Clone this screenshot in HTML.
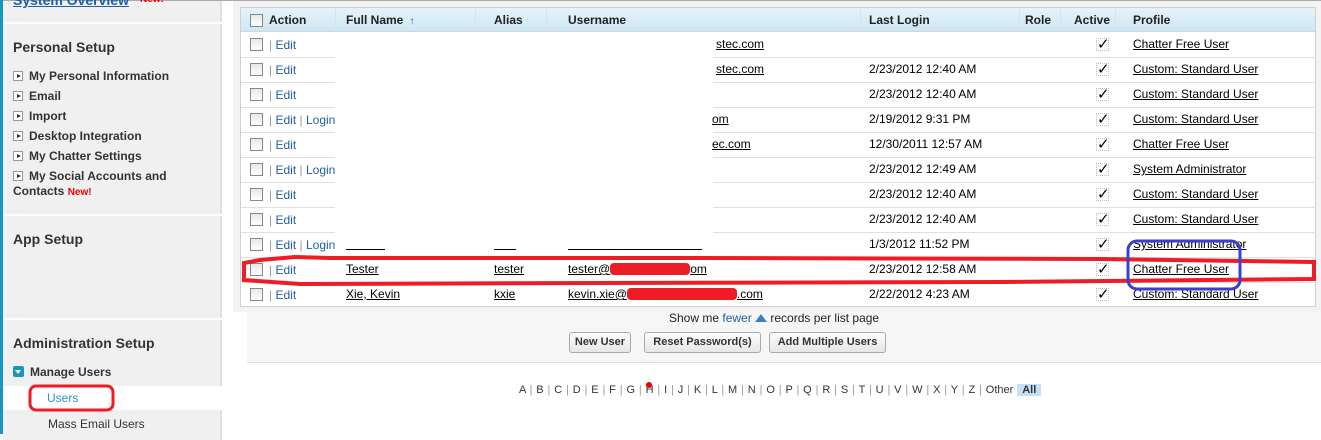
<!DOCTYPE html>
<html><head><meta charset="utf-8"><style>
*{margin:0;padding:0;box-sizing:border-box}
body{width:1321px;height:434px;overflow:hidden;background:#fff;font-family:"Liberation Sans",Arial,sans-serif;font-size:12px;color:#000;position:relative}
.a{position:absolute;white-space:nowrap}
.sec{position:absolute;left:3px;width:219px;background:#f0f0f0;border-right:2px solid #e0e0e0}
.h{position:absolute;left:13px;font-size:14px;font-weight:bold;color:#333}
.it{position:absolute;left:13px;font-weight:bold;color:#333;font-size:12px}
.tri{display:inline-block;width:10px;height:10px;border:1px solid #999;background:#fff;vertical-align:-1px;margin-right:6px;position:relative}
.tri:after{content:"";position:absolute;left:3px;top:2px;border-left:4px solid #333;border-top:2.5px solid transparent;border-bottom:2.5px solid transparent}
.cb{position:absolute;left:250px;width:13px;height:13px;border:1px solid #888;background:linear-gradient(#e8e8e8,#fff)}
.bar{color:#999}
.lnk{color:#1f5fa8}
u{text-decoration:underline}
.ck{position:absolute;left:1096px;width:13px;height:13px;border:1px dotted #bbb;font-size:15px;line-height:11px}
.hd{position:absolute;top:13px;font-weight:bold;color:#222}
.vl{position:absolute;top:9px;height:23px;width:1px;background:#d4e2ea}
.btn{position:absolute;top:332px;height:21px;border:1px solid #aaa;border-radius:3px;background:linear-gradient(#fdfdfd,#e6e6e6);font-weight:bold;font-size:11px;color:#333;text-align:center;line-height:19px}
.alpha{position:absolute;top:384px;font-size:11px;color:#333;word-spacing:0.8px}
.rd{display:inline-block;height:12px;background:#ee1c25;border-radius:4px;vertical-align:-2px}
</style></head><body>
<div class="a" style="left:0;top:0;width:1321px;height:1px;background:#aaa"></div>
<div class="a" style="left:0;top:0;width:3px;height:434px;background:#1797c0"></div>
<div class="sec" style="top:1px;height:21px"></div>
<div class="a" style="left:13px;top:-8px;font-size:14px;font-weight:bold;color:#1f5fa8;text-decoration:underline">System Overview</div>
<div class="a" style="left:140px;top:-6px;font-size:10px;font-weight:bold;color:#e00">New!</div>
<div class="sec" style="top:24px;height:190px"></div>
<div class="h" style="top:39px">Personal Setup</div>
<div class="it" style="top:69px"><span class="tri"></span>My Personal Information</div>
<div class="it" style="top:89px"><span class="tri"></span>Email</div>
<div class="it" style="top:109px"><span class="tri"></span>Import</div>
<div class="it" style="top:129px"><span class="tri"></span>Desktop Integration</div>
<div class="it" style="top:149px"><span class="tri"></span>My Chatter Settings</div>
<div class="it" style="top:169px"><span class="tri"></span>My Social Accounts and</div>
<div class="it" style="top:184px">Contacts <span style="color:#e00;font-size:10px">New!</span></div>
<div class="sec" style="top:216px;height:102px"></div>
<div class="h" style="top:231px">App Setup</div>
<div class="sec" style="top:320px;height:66px"></div>
<div class="h" style="top:335px">Administration Setup</div>
<div class="it" style="top:365px"><span style="display:inline-block;width:11px;height:11px;background:#1797c0;border-radius:2px;vertical-align:-1px;margin-right:6px;position:relative"><span style="position:absolute;left:2px;top:4px;border-top:4px solid #fff;border-left:3.5px solid transparent;border-right:3.5px solid transparent"></span></span>Manage Users</div>
<div class="a" style="left:3px;top:386px;width:219px;height:23px;background:#fff"></div>
<div class="a" style="left:47px;top:391px;color:#2a8fc6;font-size:12px">Users</div>
<div class="sec" style="top:410px;height:30px"></div>
<div class="a" style="left:48px;top:417px;color:#333">Mass Email Users</div>

<div class="a" style="left:233px;top:1px;width:1088px;height:311px;background:#f3f3f3"></div>
<div class="a" style="left:247px;top:312px;width:1074px;height:51px;background:#f6f6f6;border-bottom:1px solid #e0e0e0"></div>
<div class="a" style="left:240px;top:7px;width:1076px;height:300px;background:#fff;border:1px solid #d0d0d0"></div>
<div class="a" style="left:241px;top:8px;width:1074px;height:24px;background:linear-gradient(#e4f3fa,#cfe7f3);border-bottom:1px solid #c3d9e5"></div>
<div class="cb" style="top:14px"></div>
<div class="hd" style="left:269px">Action</div>
<div class="vl" style="left:335px"></div><div class="hd" style="left:346px">Full Name <span style="color:#1f5fa8;font-size:10px">&nbsp;↑</span></div>
<div class="vl" style="left:475px"></div><div class="hd" style="left:494px">Alias</div>
<div class="vl" style="left:546px"></div><div class="hd" style="left:568px">Username</div>
<div class="vl" style="left:860px"></div><div class="hd" style="left:869px">Last Login</div>
<div class="vl" style="left:1019px"></div><div class="hd" style="left:1025px">Role</div>
<div class="vl" style="left:1060px"></div><div class="hd" style="left:1074px">Active</div>
<div class="vl" style="left:1115px"></div><div class="hd" style="left:1133px">Profile</div>

<div class="a" style="left:241px;top:57px;width:1074px;height:1px;background:#e0e0e0"></div>
<div class="a" style="left:241px;top:82px;width:1074px;height:1px;background:#e0e0e0"></div>
<div class="a" style="left:241px;top:107px;width:1074px;height:1px;background:#e0e0e0"></div>
<div class="a" style="left:241px;top:132px;width:1074px;height:1px;background:#e0e0e0"></div>
<div class="a" style="left:241px;top:157px;width:1074px;height:1px;background:#e0e0e0"></div>
<div class="a" style="left:241px;top:182px;width:1074px;height:1px;background:#e0e0e0"></div>
<div class="a" style="left:241px;top:207px;width:1074px;height:1px;background:#e0e0e0"></div>
<div class="a" style="left:241px;top:232px;width:1074px;height:1px;background:#e0e0e0"></div>
<div class="a" style="left:241px;top:257px;width:1074px;height:1px;background:#e0e0e0"></div>
<div class="a" style="left:241px;top:282px;width:1074px;height:1px;background:#e0e0e0"></div>
<div class="a" style="left:335px;top:33px;width:378px;height:200px;background:#fff"></div>

<div class="cb" style="top:38px"></div><div class="a" style="left:269px;top:38px"><span class="bar">|</span> <span class="lnk">Edit</span></div>
<div class="a" style="left:716px;top:37px"><u>stec.com</u></div><div class="ck" style="top:38px">✓</div><div class="a" style="left:1133px;top:37px"><u>Chatter Free User</u></div>

<div class="cb" style="top:63px"></div><div class="a" style="left:269px;top:63px"><span class="bar">|</span> <span class="lnk">Edit</span></div>
<div class="a" style="left:716px;top:62px"><u>stec.com</u></div><div class="a" style="left:869px;top:62px">2/23/2012 12:40 AM</div><div class="ck" style="top:63px">✓</div><div class="a" style="left:1133px;top:62px"><u>Custom: Standard User</u></div>

<div class="cb" style="top:88px"></div><div class="a" style="left:269px;top:88px"><span class="bar">|</span> <span class="lnk">Edit</span></div>
<div class="a" style="left:869px;top:87px">2/23/2012 12:40 AM</div><div class="ck" style="top:88px">✓</div><div class="a" style="left:1133px;top:87px"><u>Custom: Standard User</u></div>

<div class="cb" style="top:113px"></div><div class="a" style="left:269px;top:113px"><span class="bar">|</span> <span class="lnk">Edit</span> <span class="bar">|</span> <span class="lnk">Login</span></div>
<div class="a" style="left:712px;top:112px"><u>om</u></div><div class="a" style="left:869px;top:112px">2/19/2012 9:31 PM</div><div class="ck" style="top:113px">✓</div><div class="a" style="left:1133px;top:112px"><u>Custom: Standard User</u></div>

<div class="cb" style="top:138px"></div><div class="a" style="left:269px;top:138px"><span class="bar">|</span> <span class="lnk">Edit</span></div>
<div class="a" style="left:712px;top:137px"><u>ec.com</u></div><div class="a" style="left:869px;top:137px">12/30/2011 12:57 AM</div><div class="ck" style="top:138px">✓</div><div class="a" style="left:1133px;top:137px"><u>Chatter Free User</u></div>

<div class="cb" style="top:163px"></div><div class="a" style="left:269px;top:163px"><span class="bar">|</span> <span class="lnk">Edit</span> <span class="bar">|</span> <span class="lnk">Login</span></div>
<div class="a" style="left:869px;top:162px">2/23/2012 12:49 AM</div><div class="ck" style="top:163px">✓</div><div class="a" style="left:1133px;top:162px"><u>System Administrator</u></div>

<div class="cb" style="top:188px"></div><div class="a" style="left:269px;top:188px"><span class="bar">|</span> <span class="lnk">Edit</span></div>
<div class="a" style="left:869px;top:187px">2/23/2012 12:40 AM</div><div class="ck" style="top:188px">✓</div><div class="a" style="left:1133px;top:187px"><u>Custom: Standard User</u></div>

<div class="cb" style="top:213px"></div><div class="a" style="left:269px;top:213px"><span class="bar">|</span> <span class="lnk">Edit</span></div>
<div class="a" style="left:869px;top:212px">2/23/2012 12:40 AM</div><div class="ck" style="top:213px">✓</div><div class="a" style="left:1133px;top:212px"><u>Custom: Standard User</u></div>

<div class="cb" style="top:238px"></div><div class="a" style="left:269px;top:238px"><span class="bar">|</span> <span class="lnk">Edit</span> <span class="bar">|</span> <span class="lnk">Login</span></div>
<div class="a" style="left:346px;top:249px;width:39px;height:1px;background:#000"></div>
<div class="a" style="left:494px;top:249px;width:22px;height:1px;background:#000"></div>
<div class="a" style="left:568px;top:249px;width:134px;height:1px;background:#000"></div>
<div class="a" style="left:869px;top:237px">1/3/2012 11:52 PM</div><div class="ck" style="top:238px">✓</div><div class="a" style="left:1133px;top:237px"><u>System Administrator</u></div>

<div class="cb" style="top:263px"></div><div class="a" style="left:269px;top:263px"><span class="bar">|</span> <span class="lnk">Edit</span></div>
<div class="a" style="left:346px;top:262px"><u>Tester</u></div><div class="a" style="left:494px;top:262px"><u>tester</u></div>
<div class="a" style="left:568px;top:262px"><u>tester@</u><span class="rd" style="width:80px"></span><u>om</u></div>
<div class="a" style="left:869px;top:262px">2/23/2012 12:58 AM</div><div class="ck" style="top:263px">✓</div><div class="a" style="left:1133px;top:262px"><u>Chatter Free User</u></div>

<div class="cb" style="top:288px"></div><div class="a" style="left:269px;top:288px"><span class="bar">|</span> <span class="lnk">Edit</span></div>
<div class="a" style="left:346px;top:287px"><u>Xie, Kevin</u></div><div class="a" style="left:494px;top:287px"><u>kxie</u></div>
<div class="a" style="left:568px;top:287px"><u>kevin.xie@</u><span class="rd" style="width:110px"></span><u>.com</u></div>
<div class="a" style="left:869px;top:287px">2/22/2012 4:23 AM</div><div class="ck" style="top:288px">✓</div><div class="a" style="left:1133px;top:287px"><u>Custom: Standard User</u></div>

<svg class="a" style="left:0;top:0" width="1321" height="434">
<path d="M244 263 L244 280 L300 284 L600 283 L1000 282 L1314 279 L1314 262 L1100 259 L700 258 L330 258 L295 257 L260 260 Z" fill="none" stroke="#ee1c25" stroke-width="4"/>
<rect x="1128" y="241" width="112" height="48" rx="9" fill="none" stroke="#3b3fcc" stroke-width="3"/>
<rect x="30" y="386" width="83" height="24" rx="6" fill="none" stroke="#ee1c25" stroke-width="3"/>
</svg>

<div class="a" style="left:669px;top:311px;color:#222">Show me <span class="lnk">fewer</span> <span style="display:inline-block;border-bottom:8px solid #3a80c8;border-left:6px solid transparent;border-right:6px solid transparent;vertical-align:0"></span> records per list page</div>
<div class="btn" style="left:569px;width:62px">New User</div>
<div class="btn" style="left:644px;width:117px">Reset Password(s)</div>
<div class="btn" style="left:769px;width:117px">Add Multiple Users</div>

<div class="alpha" style="left:519px">A <span class="bar">|</span> B <span class="bar">|</span> C <span class="bar">|</span> D <span class="bar">|</span> E <span class="bar">|</span> F <span class="bar">|</span> G <span class="bar">|</span> H <span class="bar">|</span> I <span class="bar">|</span> J <span class="bar">|</span> K <span class="bar">|</span> L <span class="bar">|</span> M <span class="bar">|</span> N <span class="bar">|</span> O <span class="bar">|</span> P <span class="bar">|</span> Q <span class="bar">|</span> R <span class="bar">|</span> S <span class="bar">|</span> T <span class="bar">|</span> U <span class="bar">|</span> V <span class="bar">|</span> W <span class="bar">|</span> X <span class="bar">|</span> Y <span class="bar">|</span> Z <span class="bar">|</span> Other <span style="background:#c7e0f4;font-weight:bold;padding:0 5px;word-spacing:0">All</span></div>
<div class="a" style="left:646px;top:382px;width:6px;height:6px;border-radius:3px;background:#e00"></div>
</body></html>
